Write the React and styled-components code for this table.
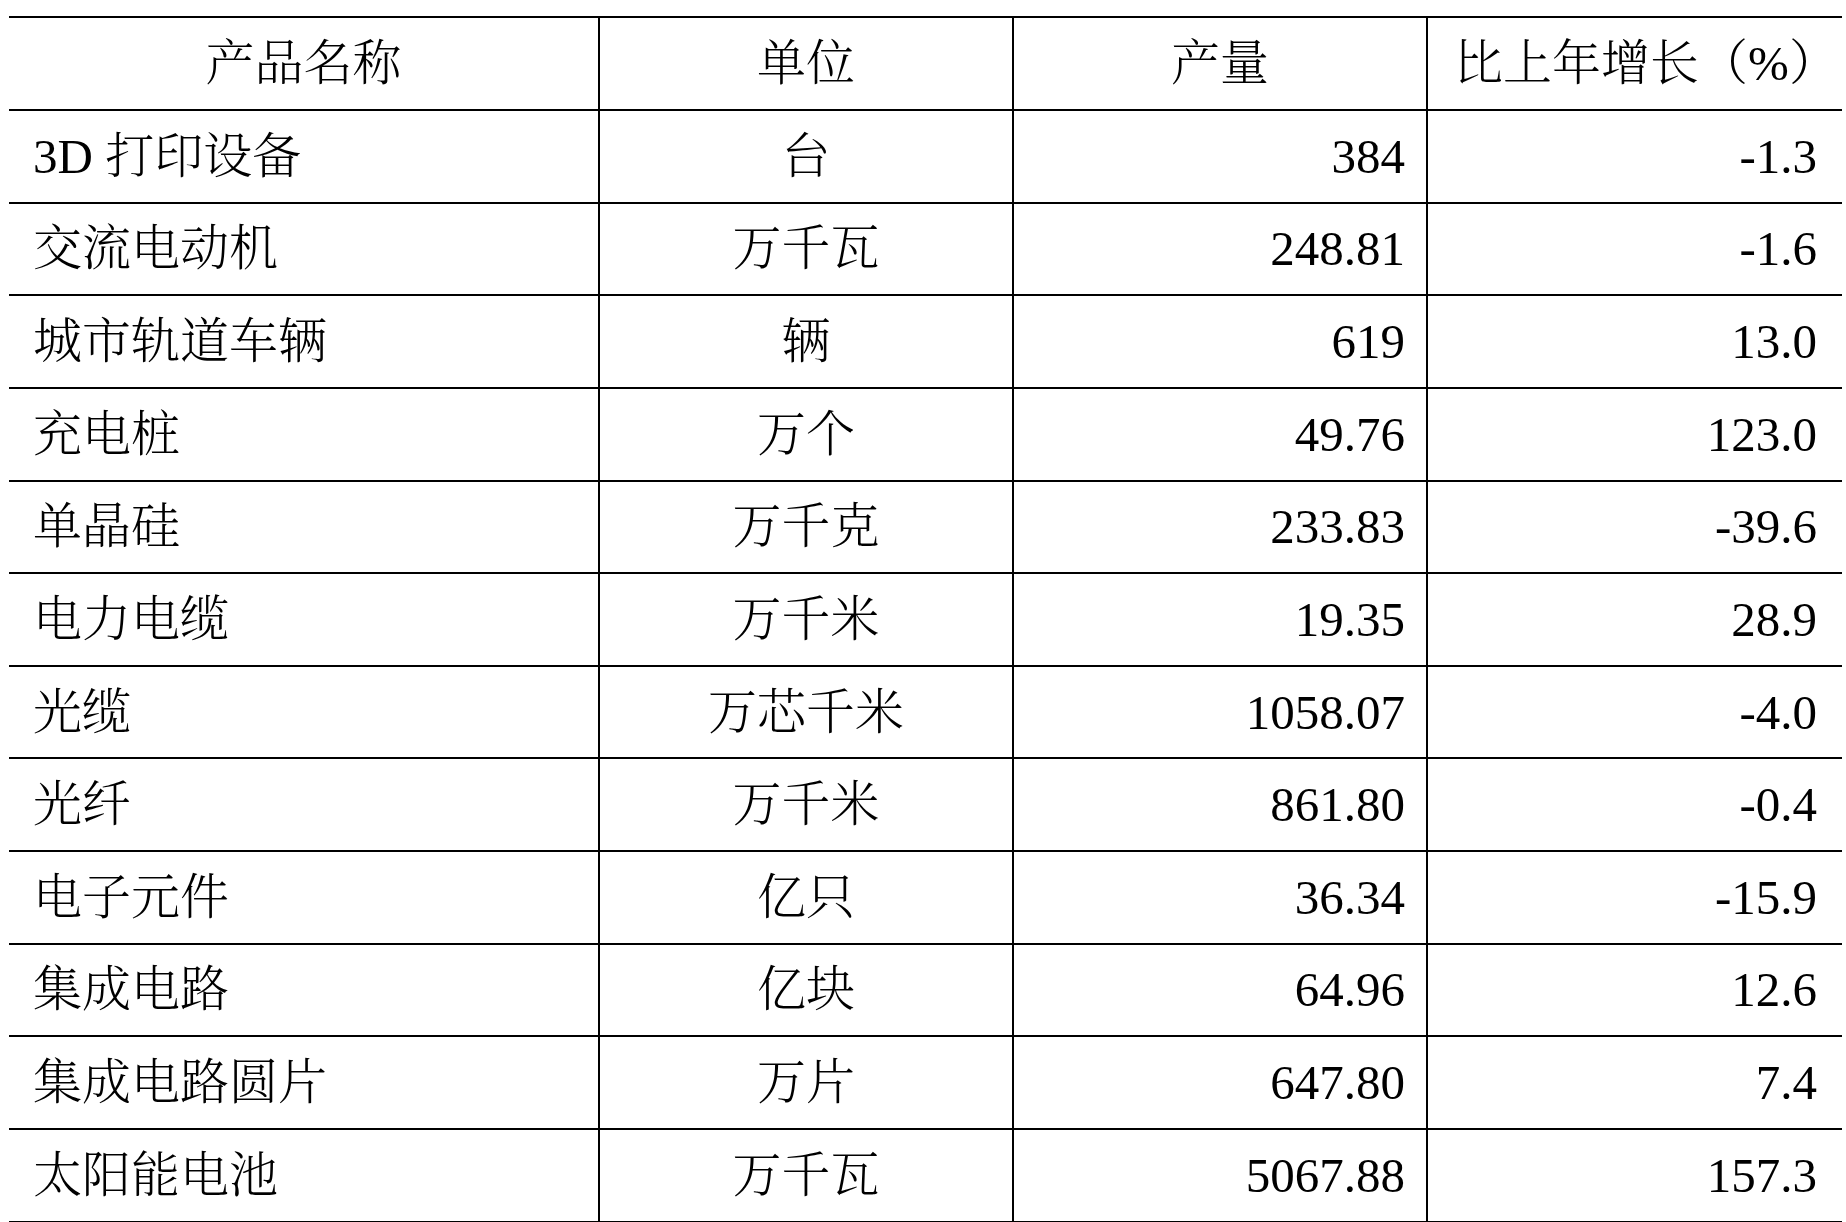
import React from "react";
import styled, { createGlobalStyle } from "styled-components";

const GlobalStyle = createGlobalStyle`
  html, body {
    margin: 0;
    padding: 0;
    background: #ffffff;
  }
  body {
    font-family: "Liberation Serif", "Noto Serif CJK SC", "Noto Sans CJK SC", serif;
    color: #000000;
  }
`;

const Page = styled.div`
  padding: 16px 4px 0 9px;
`;

const Grid = styled.div`
  display: grid;
  grid-template-columns: 589px 414px 414px 416px;
  border-top: 2px solid #000;
`;

const Cell = styled.div`
  box-sizing: border-box;
  height: ${(p) => (p.$head ? "93px" : "92.64px")};
  display: flex;
  align-items: center;
  justify-content: ${(p) =>
    p.$align === "left" ? "flex-start" : p.$align === "right" ? "flex-end" : "center"};
  padding-left: ${(p) => (p.$align === "left" ? "24px" : `${p.$pl || 0}px`)};
  padding-right: ${(p) => (p.$align === "right" ? `${p.$pr}px` : "0")};
  border-bottom: 2px solid #000;
  border-left: ${(p) => (p.$first ? "none" : "2px solid #000")};
  font-family: "Liberation Serif", "Noto Serif CJK SC", "Noto Sans CJK SC", serif;
  font-size: 49px;
  font-weight: 300;
  line-height: 1;
  white-space: nowrap;
`;

const headers = ["产品名称", "单位", "产量", "比上年增长（%）"];

const rows = [
  ["3D 打印设备", "台", "384", "-1.3"],
  ["交流电动机", "万千瓦", "248.81", "-1.6"],
  ["城市轨道车辆", "辆", "619", "13.0"],
  ["充电桩", "万个", "49.76", "123.0"],
  ["单晶硅", "万千克", "233.83", "-39.6"],
  ["电力电缆", "万千米", "19.35", "28.9"],
  ["光缆", "万芯千米", "1058.07", "-4.0"],
  ["光纤", "万千米", "861.80", "-0.4"],
  ["电子元件", "亿只", "36.34", "-15.9"],
  ["集成电路", "亿块", "64.96", "12.6"],
  ["集成电路圆片", "万片", "647.80", "7.4"],
  ["太阳能电池", "万千瓦", "5067.88", "157.3"],
];

export default function App() {
  return (
    <>
      <GlobalStyle />
      <Page>
        <Grid>
          {headers.map((h, i) => (
            <Cell key={h} $head $first={i === 0} $align="center" $pl={i === 3 ? 22 : 0}>
              {h}
            </Cell>
          ))}
          {rows.map((r) => (
            <React.Fragment key={r[0]}>
              <Cell $first $align="left">{r[0]}</Cell>
              <Cell $align="center">{r[1]}</Cell>
              <Cell $align="right" $pr={21}>{r[2]}</Cell>
              <Cell $align="right" $pr={25}>{r[3]}</Cell>
            </React.Fragment>
          ))}
        </Grid>
      </Page>
    </>
  );
}
